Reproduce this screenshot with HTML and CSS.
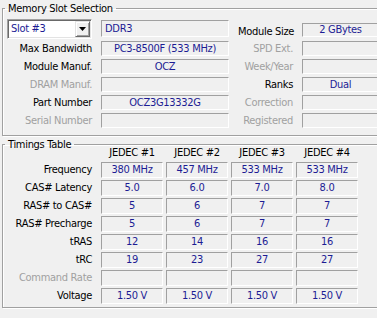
FILE: index.html
```html
<!DOCTYPE html>
<html>
<head>
<meta charset="utf-8">
<link rel="stylesheet" href="styles.css">
</head>
<body>
<div class="window">
  <fieldset class="group slot-group">
    <legend>Memory Slot Selection</legend>
    <div class="slot-grid">
      <div class="combo">
        <span class="combo-text">Slot #3</span>
        <span class="combo-btn"><svg width="7" height="4" viewBox="0 0 7 4"><path d="M0 0h7L3.5 4z" fill="#000"/></svg></span>
      </div>
      <div class="field type-field">DDR3</div>
      <div class="label size-label">Module Size</div>
      <div class="field size-field">2 GBytes</div>

      <div class="label">Max Bandwidth</div>
      <div class="field">PC3-8500F (533 MHz)</div>
      <div class="label dim">SPD Ext.</div>
      <div class="field"></div>

      <div class="label">Module Manuf.</div>
      <div class="field">OCZ</div>
      <div class="label dim">Week/Year</div>
      <div class="field"></div>

      <div class="label dim">DRAM Manuf.</div>
      <div class="field"></div>
      <div class="label">Ranks</div>
      <div class="field">Dual</div>

      <div class="label">Part Number</div>
      <div class="field">OCZ3G13332G</div>
      <div class="label dim">Correction</div>
      <div class="field"></div>

      <div class="label dim">Serial Number</div>
      <div class="field"></div>
      <div class="label dim">Registered</div>
      <div class="field"></div>
    </div>
  </fieldset>

  <fieldset class="group timings-group">
    <legend>Timings Table</legend>
    <div class="timings-grid">
      <div class="head-spacer"></div>
      <div class="head">JEDEC #1</div>
      <div class="head">JEDEC #2</div>
      <div class="head">JEDEC #3</div>
      <div class="head">JEDEC #4</div>

      <div class="tlabel">Frequency</div>
      <div class="cell">380 MHz</div><div class="cell">457 MHz</div><div class="cell">533 MHz</div><div class="cell">533 MHz</div>

      <div class="tlabel">CAS# Latency</div>
      <div class="cell">5.0</div><div class="cell">6.0</div><div class="cell">7.0</div><div class="cell">8.0</div>

      <div class="tlabel">RAS# to CAS#</div>
      <div class="cell">5</div><div class="cell">6</div><div class="cell">7</div><div class="cell">7</div>

      <div class="tlabel">RAS# Precharge</div>
      <div class="cell">5</div><div class="cell">6</div><div class="cell">7</div><div class="cell">7</div>

      <div class="tlabel">tRAS</div>
      <div class="cell">12</div><div class="cell">14</div><div class="cell">16</div><div class="cell">16</div>

      <div class="tlabel">tRC</div>
      <div class="cell">19</div><div class="cell">23</div><div class="cell">27</div><div class="cell">27</div>

      <div class="tlabel dim">Command Rate</div>
      <div class="cell"></div><div class="cell"></div><div class="cell"></div><div class="cell"></div>

      <div class="tlabel">Voltage</div>
      <div class="cell">1.50 V</div><div class="cell">1.50 V</div><div class="cell">1.50 V</div><div class="cell">1.50 V</div>
    </div>
  </fieldset>
</div>
</body>
</html>
```

FILE: styles.css
```css
html, body {
  margin: 0;
  padding: 0;
  background: #f0f0f0;
  overflow: hidden;
}

body {
  font-family: "DejaVu Sans Condensed", "Liberation Sans", Arial, sans-serif;
  font-size: 11px;
  letter-spacing: -0.3px;
  color: #000;
  width: 377px;
  height: 318px;
}

.window {
  width: 377px;
  height: 318px;
  overflow: hidden;
}

.group {
  margin: 0 0 0 2px;
  padding: 0;
  width: 400px;
  min-width: 0;
  border: 1px solid #a0a0a0;
  box-shadow: inset 1px 1px 0 #fff, 1px 1px 0 #fff;
  box-sizing: border-box;
}

.group legend {
  margin-left: 2px;
  padding: 0 3px;
  line-height: 17px;
  height: 17px;
  font-size: 11px;
}

/* Slot selection */
.slot-grid {
  display: grid;
  grid-template-columns: 85px 128px 55px 77px;
  grid-template-rows: 19px repeat(5, 15px);
  column-gap: 9px;
  row-gap: 3px;
  margin: 2px 0 7px 4px;
}

.label {
  text-align: right;
  line-height: 15px;
  white-space: nowrap;
}

.dim {
  color: #a0a0a0;
}

.field {
  box-sizing: border-box;
  height: 15px;
  border-top: 1px solid #a0a0a0;
  border-left: 1px solid #a0a0a0;
  border-bottom: 1px solid #fff;
  border-right: 1px solid #fff;
  color: #1c1c94;
  text-align: center;
  line-height: 13px;
  white-space: nowrap;
  overflow: hidden;
}

.type-field {
  height: 17px;
  margin-top: 1px;
  line-height: 15px;
  text-align: left;
  padding-left: 3px;
}

.size-label {
  line-height: 14px;
  align-self: end;
  margin-bottom: -1px;
}

.size-field {
  height: 14px;
  margin-top: 4px;
  line-height: 12px;
}

.combo {
  box-sizing: border-box;
  height: 20px;
  background: #fff;
  border-top: 1px solid #a0a0a0;
  border-left: 1px solid #a0a0a0;
  border-right: 1px solid #fff;
  border-bottom: 1px solid #fff;
  box-shadow: inset 1px 1px 0 #696969, inset -1px -1px 0 #e3e3e3;
  display: flex;
  align-items: center;
  justify-content: space-between;
  padding: 2px 1px 2px 3px;
}

.combo-text {
  color: #1c1c94;
  line-height: 14px;
}

.combo-btn {
  box-sizing: border-box;
  width: 15px;
  height: 16px;
  background: #f0f0f0;
  border-top: 1px solid #e3e3e3;
  border-left: 1px solid #e3e3e3;
  border-right: 1px solid #696969;
  border-bottom: 1px solid #696969;
  box-shadow: inset 1px 1px 0 #fff, inset -1px -1px 0 #a0a0a0;
  display: flex;
  align-items: center;
  justify-content: center;
}

/* Timings */
.timings-grid {
  display: grid;
  grid-template-columns: 91px 62px 62px 62px 62px;
  grid-template-rows: 15px repeat(8, 16px);
  column-gap: 3px;
  row-gap: 2px;
  margin: -8px 0 3px 4px;
}

.head {
  text-align: center;
  line-height: 15px;
  white-space: nowrap;
}

.tlabel {
  text-align: right;
  padding-right: 6px;
  line-height: 16px;
  white-space: nowrap;
}

.cell {
  box-sizing: border-box;
  height: 16px;
  border-top: 1px solid #a0a0a0;
  border-left: 1px solid #a0a0a0;
  border-bottom: 1px solid #fff;
  border-right: 1px solid #fff;
  color: #1c1c94;
  text-align: center;
  line-height: 14px;
  white-space: nowrap;
}
```
